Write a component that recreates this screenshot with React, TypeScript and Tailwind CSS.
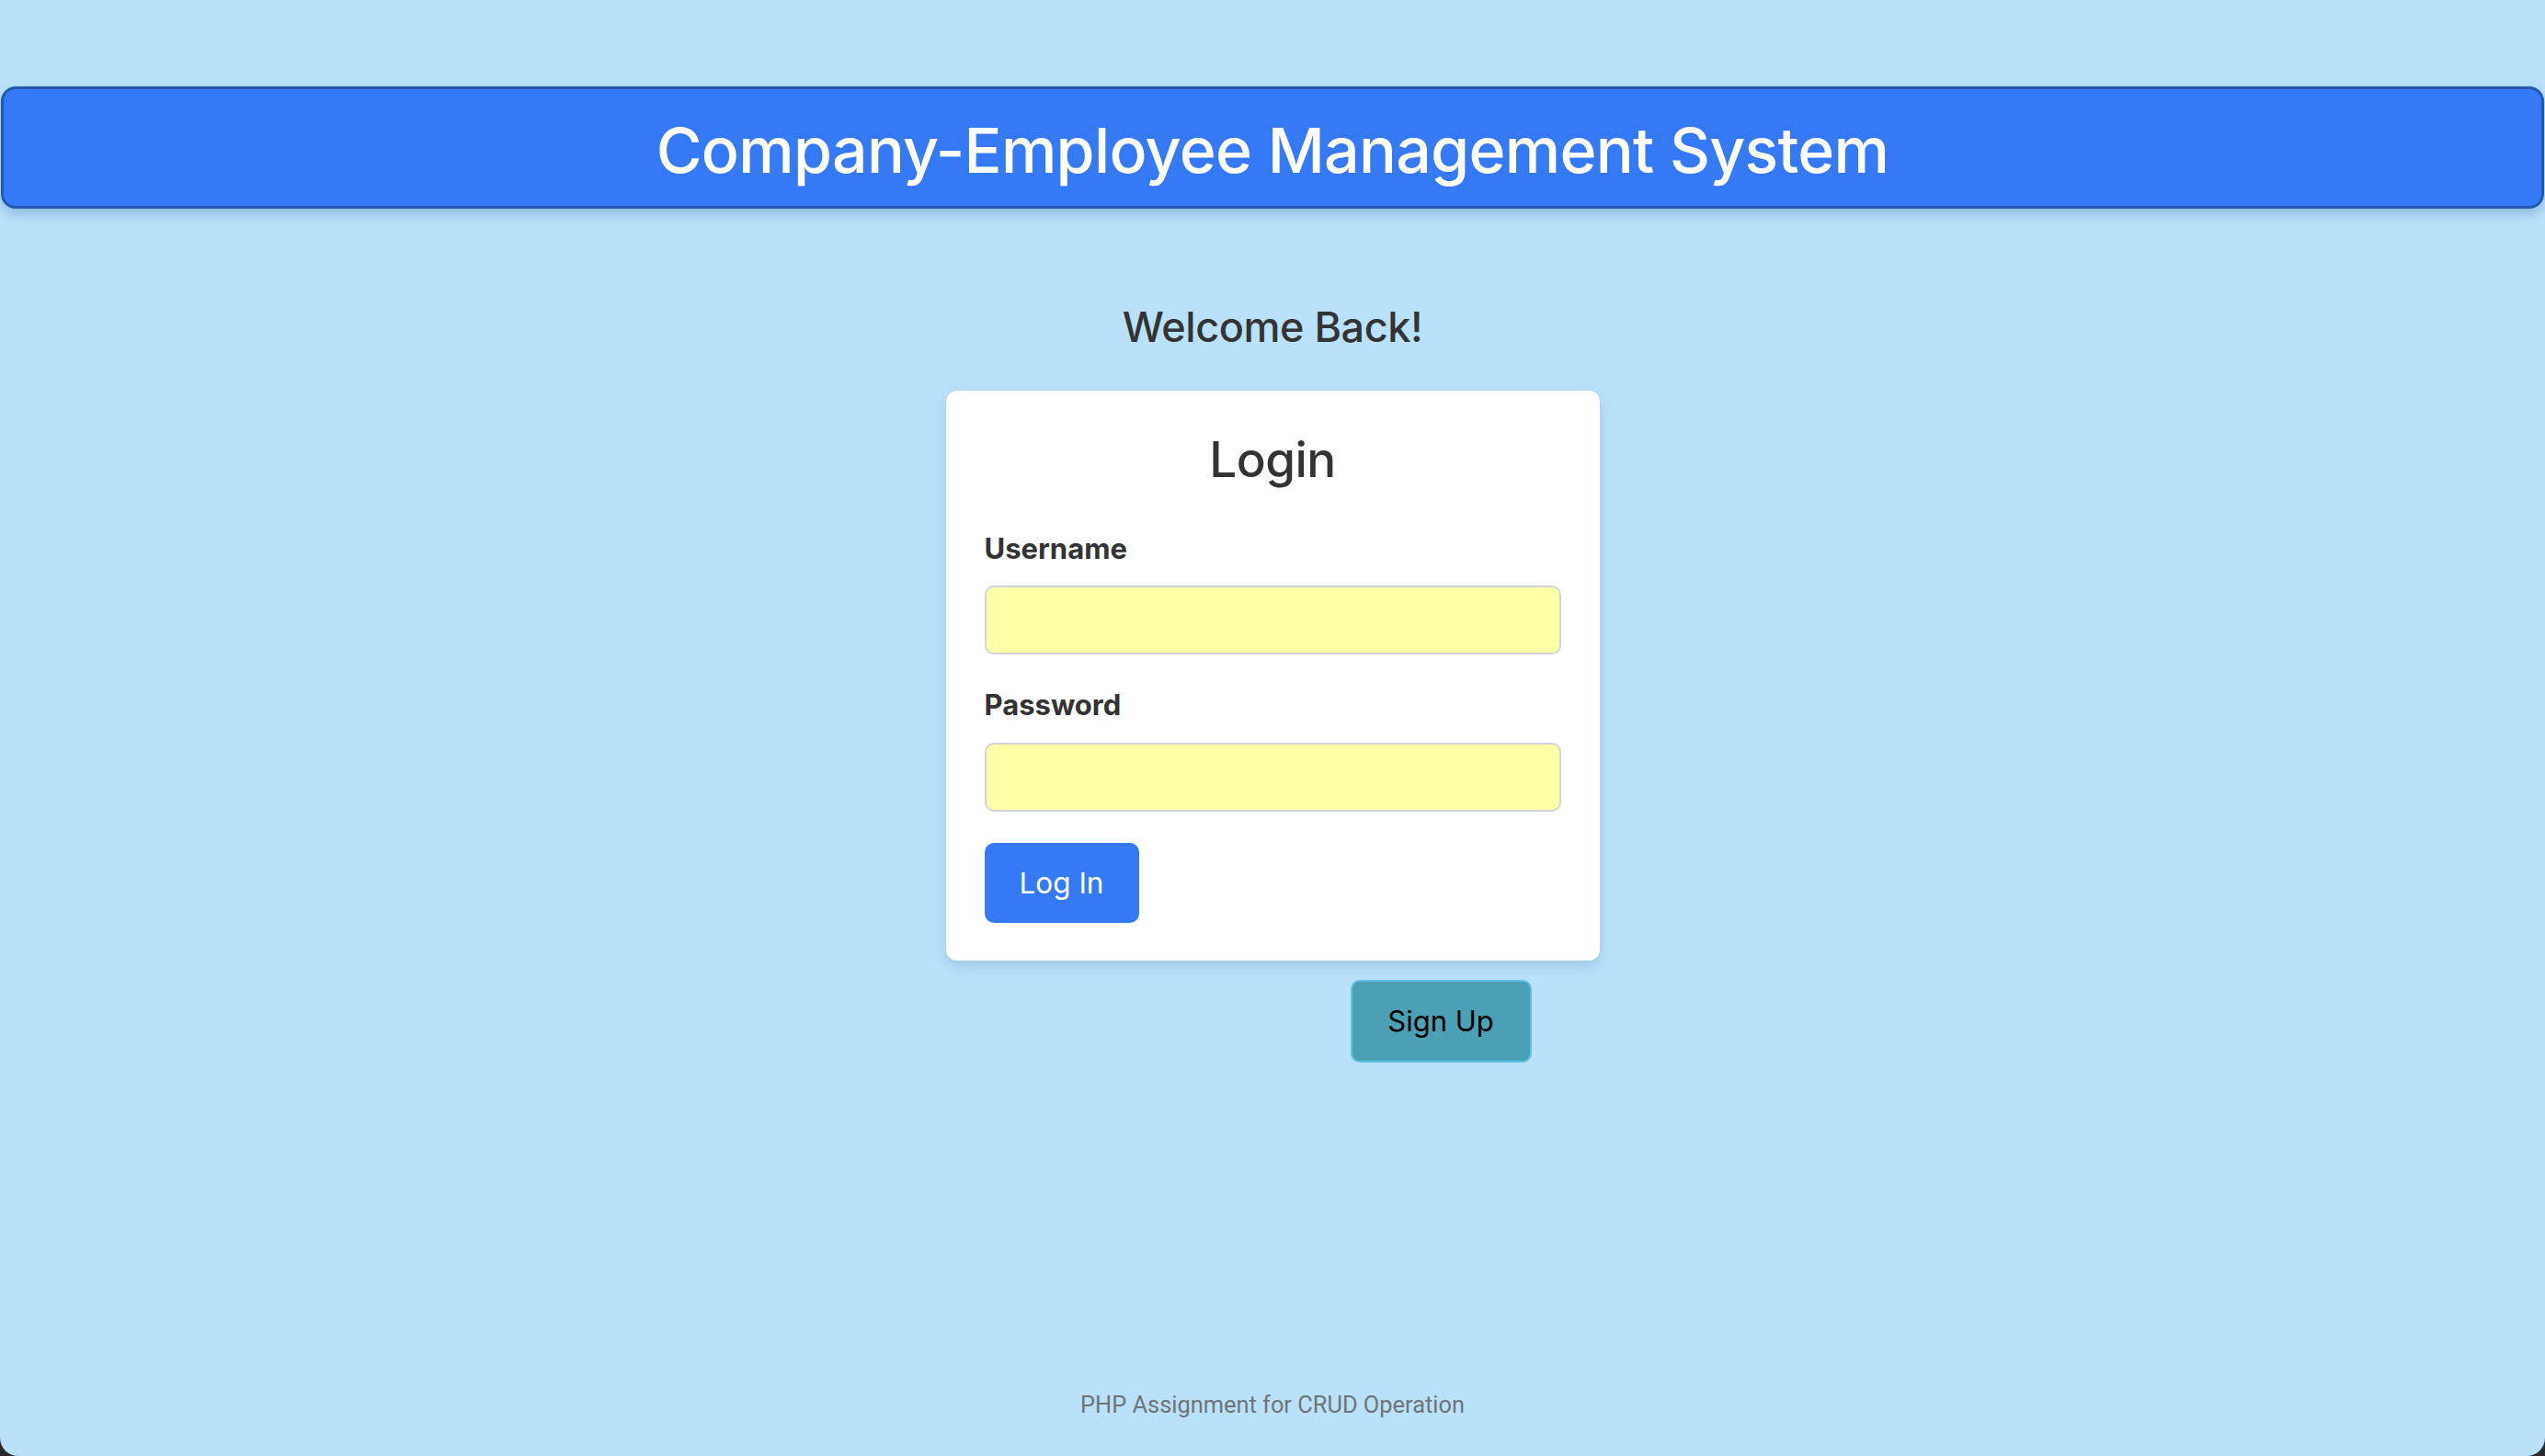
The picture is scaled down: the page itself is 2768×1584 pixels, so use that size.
export default function App() {
    return (
        <div className="h-screen w-full bg-[#2b2b2b]">
            <div
                className="flex h-full flex-col rounded-b-[20px] bg-[#b9e1fa] text-[#333333]"
                style={{ fontFamily: 'Inter, "Noto Sans", sans-serif' }}
            >
                {/* Header */}
                <header className="mx-px mt-[94px] flex h-[133px] items-center justify-center rounded-[16px] border-[3px] border-[#2559b0] bg-[#3579f6] pt-[5px] shadow-[0_6px_12px_rgba(30,80,150,0.25)]">
                    <h1 className="text-[68px] font-medium leading-none tracking-[-0.01em] text-white">
                        Company-Employee Management System
                    </h1>
                </header>

                {/* Login */}
                <main className="flex flex-col items-center pt-[102px]">
                    <h3 className="text-[45px] font-medium leading-[1.2] tracking-[-0.01em]">Welcome Back!</h3>

                    <div className="mt-[42px] w-[711px]">
                        <div className="rounded-[12px] bg-white px-[42px] pt-[44px] pb-[41px] shadow-[0_6px_14px_rgba(40,90,140,0.18)]">
                            <h2 className="text-center text-[53px] font-medium leading-[1.2] tracking-[-0.01em]">Login</h2>

                            <form className="mt-[42px]" onSubmit={(e) => e.preventDefault()}>
                                <label className="block text-[31px] font-bold leading-[1.4]">
                                    Username
                                </label>
                                <input
                                    type="text"
                                    className="mt-[19px] block h-[75px] w-full rounded-[10px] border-2 border-[#cfd4da] bg-[#ffffa8] px-[21px] text-[28px] outline-none"
                                />

                                <label className="mt-[33px] block text-[31px] font-bold leading-[1.4]">
                                    Password
                                </label>
                                <input
                                    type="password"
                                    className="mt-[20px] block h-[75px] w-full rounded-[10px] border-2 border-[#cfd4da] bg-[#ffffa8] px-[21px] text-[28px] outline-none"
                                />

                                <button
                                    type="submit"
                                    className="mt-[34px] flex h-[87px] w-[168px] items-center justify-center rounded-[10px] bg-[#3679f6] text-[31.5px] text-white"
                                >
                                    Log In
                                </button>
                            </form>
                        </div>

                        <button className="mt-[21px] ml-[440px] flex h-[90px] w-[197px] items-center justify-center rounded-[10px] border-2 border-[#5cc3e6] bg-[#4ba0b6] text-[31px] text-black">
                            Sign Up
                        </button>
                    </div>
                </main>

                {/* Footer */}
                <footer
                    className="mt-auto pb-[37px] text-center text-[25.4px] leading-[1.5] text-[#6f7478]"
                    style={{ fontFamily: 'Roboto, "Liberation Sans", sans-serif' }}
                >
                    PHP Assignment for CRUD Operation
                </footer>
            </div>
        </div>
    );
}
